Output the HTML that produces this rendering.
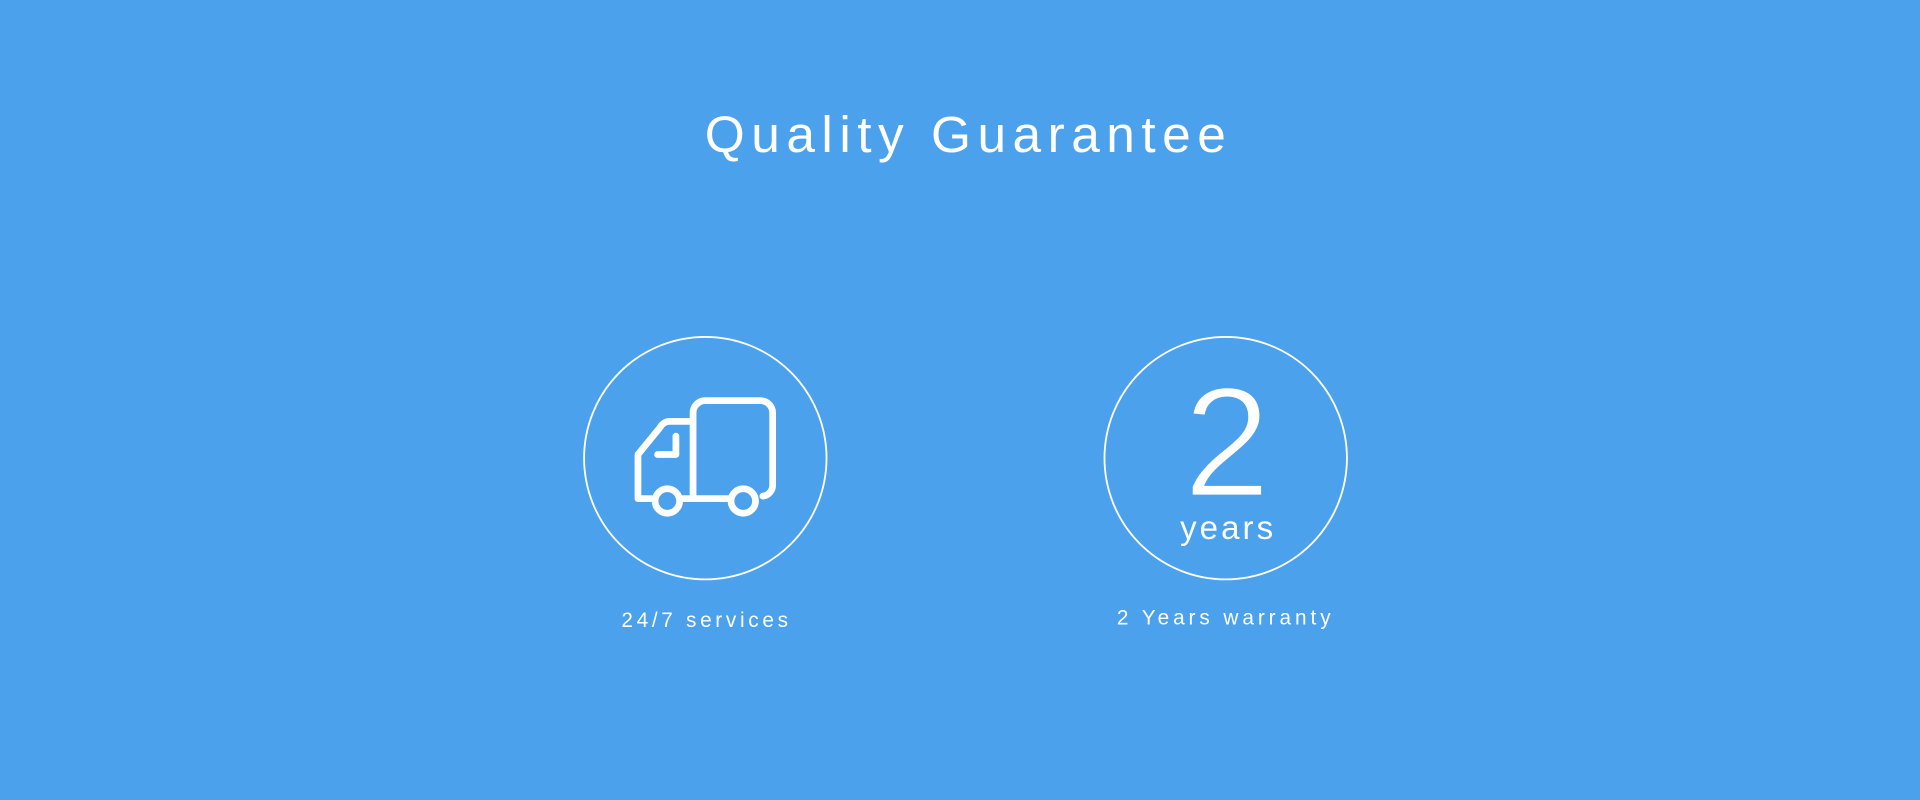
<!DOCTYPE html>
<html><head><meta charset="utf-8"><style>
html,body{margin:0;padding:0;background:#4BA1EB;overflow:hidden}
svg{display:block}
text{font-family:"Liberation Sans",sans-serif;fill:#fff}
</style></head><body>
<svg width="1920" height="800" viewBox="0 0 1568 653" xmlns="http://www.w3.org/2000/svg">
<rect width="1568" height="653" fill="#4BA1EB"/>
<text x="791" y="124" font-size="42" text-anchor="middle" letter-spacing="5.3">Quality Guarantee</text>
<circle cx="576" cy="374" r="99" fill="none" stroke="#fff" stroke-width="1.5"/>
<circle cx="1001" cy="374" r="99" fill="none" stroke="#fff" stroke-width="1.5"/>
<g fill="none" stroke="#fff" stroke-width="5.5" stroke-linejoin="round" stroke-linecap="round">
<path d="M566 405 V337 a10 10 0 0 1 10 -10 H621 a10 10 0 0 1 10 10 V396 a9 9 0 0 1 -8 9"/>
<path d="M566 344 H547 a9 9 0 0 0 -8 5 L521 371 V407 H532"/>
<path d="M557 407 H596"/>
<path d="M552 356 V371 H537"/>
<circle cx="545" cy="409" r="10"/>
<circle cx="607" cy="409" r="10"/>
</g>
<text x="1002" y="405" font-size="128" text-anchor="middle" stroke="#4BA1EB" stroke-width="2.5" paint-order="stroke" style="paint-order:normal">2</text>
<text x="1003" y="440" font-size="27" text-anchor="middle" letter-spacing="2.5">years</text>
<text x="577" y="512" font-size="17" text-anchor="middle" letter-spacing="3">24/7 services</text>
<text x="1001" y="510" font-size="17" text-anchor="middle" letter-spacing="3.2">2 Years warranty</text>
</svg>
</body></html>
